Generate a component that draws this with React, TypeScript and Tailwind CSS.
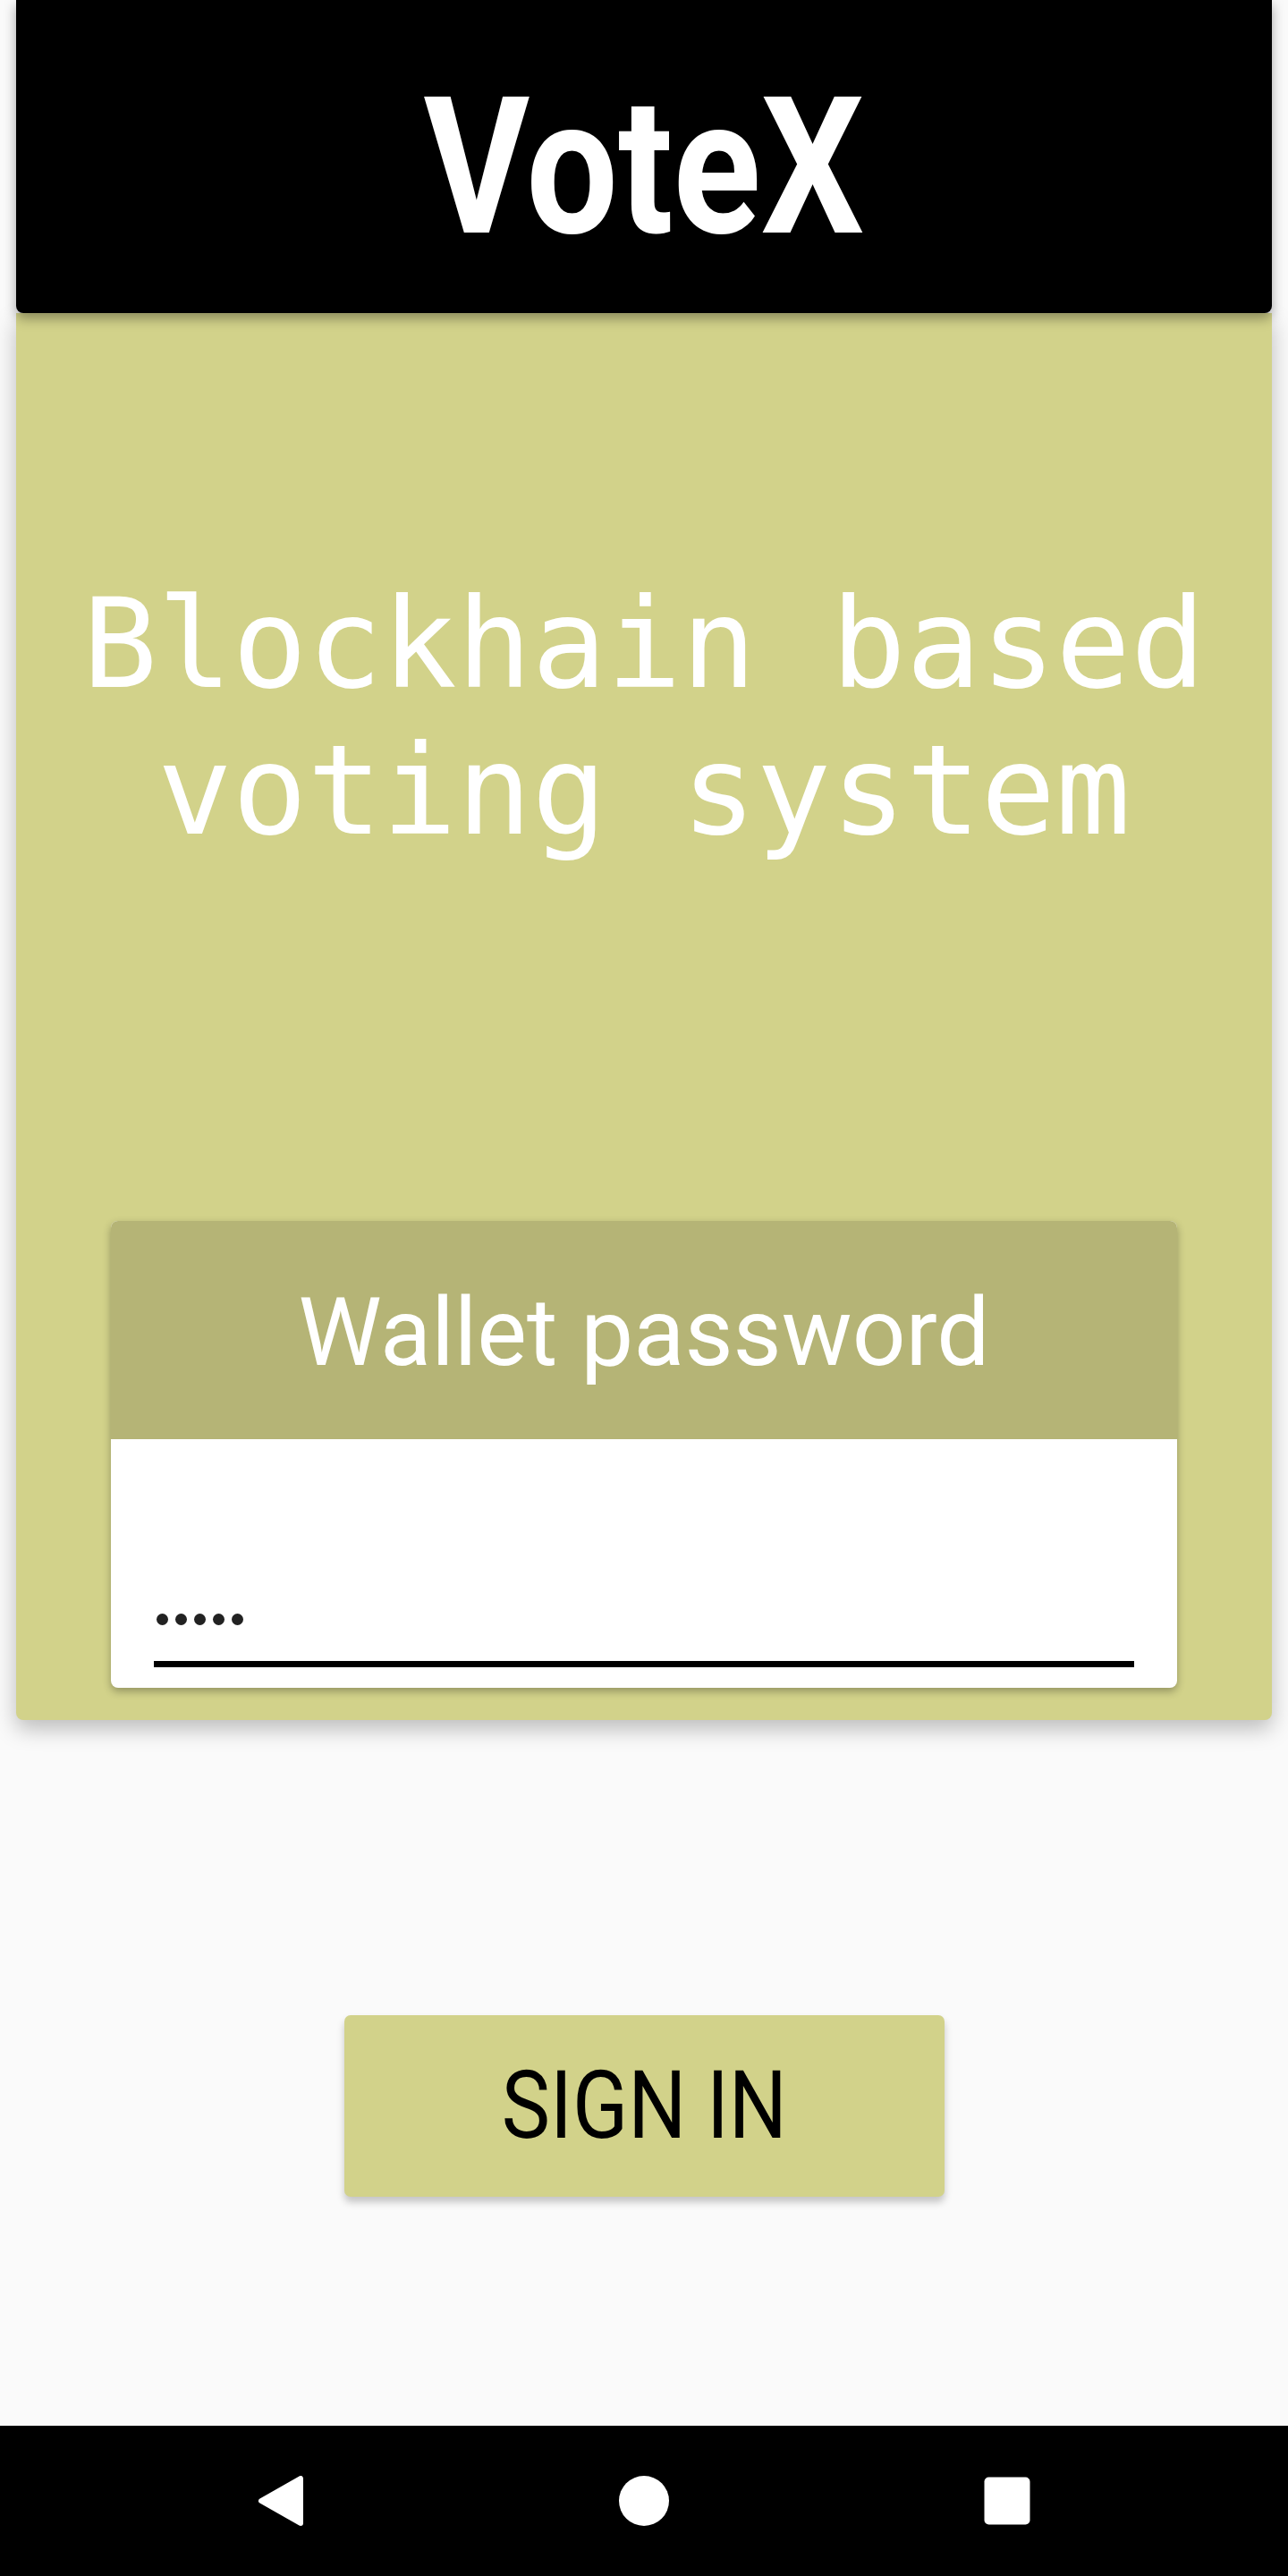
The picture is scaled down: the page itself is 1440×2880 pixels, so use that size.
export default function App() {
  return (
    <div className="flex min-h-[2880px] flex-col bg-[#fafafa] font-['Roboto',sans-serif]">
      <header className="relative z-20 mx-[18px] flex h-[350px] items-center justify-center rounded-b-[8px] bg-black shadow-[0_6px_14px_rgba(0,0,0,0.35)]">
        <h1 className="mt-[24px] scale-x-[0.85] text-[214px] font-bold leading-none text-white">VoteX</h1>
      </header>

      <section className="relative z-10 mx-[18px] flex h-[1573px] flex-col items-center rounded-b-[8px] bg-[#d2d28a] shadow-[0_10px_24px_rgba(0,0,0,0.25)]">
        <p className="whitespace-nowrap pt-[288px] text-center font-['DejaVu_Sans_Mono',monospace] text-[139px] leading-[164px] text-white">
          Blockhain based
          <br />
          voting system
        </p>

        <div className="mt-[399px] w-[1192px] overflow-hidden rounded-[8px] bg-white shadow-[0_4px_10px_rgba(0,0,0,0.3)]">
          <div className="flex h-[244px] items-center justify-center bg-[#b5b476]">
            <span className="mt-[6px] text-[105px] leading-none text-white">Wallet password</span>
          </div>
          <div className="px-[48px] pb-[23px] pt-[195px]">
            <div className="flex gap-[8px] pl-[3px]">
              <span className="h-[13px] w-[13px] rounded-full bg-[#222]" />
              <span className="h-[13px] w-[13px] rounded-full bg-[#222]" />
              <span className="h-[13px] w-[13px] rounded-full bg-[#222]" />
              <span className="h-[13px] w-[13px] rounded-full bg-[#222]" />
              <span className="h-[13px] w-[13px] rounded-full bg-[#222]" />
            </div>
            <div className="mt-[40px] h-[7px] bg-black" />
          </div>
        </div>
      </section>

      <div className="mt-[330px] flex justify-center">
        <button className="flex h-[203px] w-[671px] items-center justify-center rounded-[7px] bg-[#d2d28a] shadow-[0_6px_8px_rgba(0,0,0,0.22)]">
          <span className="scale-x-[0.87] text-[105px] leading-none text-black">SIGN IN</span>
        </button>
      </div>

      <nav className="mt-auto flex h-[168px] items-center justify-center gap-[350px] bg-black">
        <svg width="56" height="56" viewBox="0 0 56 56">
          <polygon points="6,28 50,3 50,53" fill="white" stroke="white" strokeWidth="6" strokeLinejoin="round" />
        </svg>
        <svg width="56" height="56" viewBox="0 0 56 56">
          <circle cx="28" cy="28" r="28" fill="white" />
        </svg>
        <svg width="56" height="56" viewBox="0 0 56 56">
          <rect x="2.5" y="1.5" width="51" height="53" rx="5" fill="white" />
        </svg>
      </nav>
    </div>
  );
}
